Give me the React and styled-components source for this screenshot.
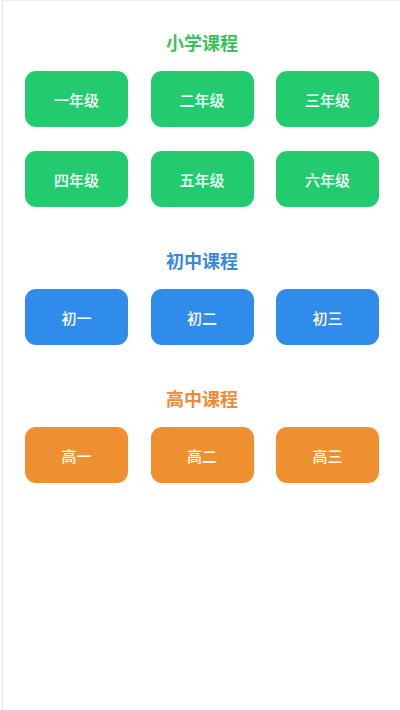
import React from "react";
import styled, { createGlobalStyle } from "styled-components";

const GlobalStyle = createGlobalStyle`
	html, body {
		margin: 0;
		padding: 0;
		background: #ffffff;
		font-family: "Noto Sans CJK SC", "Noto Sans", sans-serif;
	}
`;

const Page = styled.div`
	box-sizing: border-box;
	margin-left: 2px;
	min-height: 710px;
	border-left: 1px solid #e2e2e2;
	border-top: 1px solid #eeeeee;
	padding: 24px 21px 0 22px;
`;

const Section = styled.section`
	margin-bottom: ${(p) => p.gap}px;
`;

const Title = styled.h2`
	margin: 0 0 12px 0;
	height: 34px;
	line-height: 34px;
	text-align: center;
	font-size: 18px;
	font-weight: 700;
	color: ${(p) => p.color};
`;

const Grid = styled.div`
	display: grid;
	grid-template-columns: repeat(3, 103px);
	justify-content: space-between;
	row-gap: 24px;
`;

const CourseButton = styled.button`
	height: 56px;
	border: none;
	border-radius: 11px;
	background: ${(p) => p.bg};
	color: #ffffff;
	font-family: inherit;
	font-size: 15px;
	font-weight: 500;
	cursor: pointer;
	padding: 0;
`;

const sections = [
	{
		title: "小学课程",
		titleColor: "#3dc15c",
		bg: "#22cc6e",
		gap: 36,
		items: ["一年级", "二年级", "三年级", "四年级", "五年级", "六年级"],
	},
	{
		title: "初中课程",
		titleColor: "#3a89dd",
		bg: "#2f8ceb",
		gap: 36,
		items: ["初一", "初二", "初三"],
	},
	{
		title: "高中课程",
		titleColor: "#ef8a35",
		bg: "#f08f2f",
		gap: 0,
		items: ["高一", "高二", "高三"],
	},
];

export default function App() {
	return (
		<>
			<GlobalStyle />
			<Page>
				{sections.map((s) => (
					<Section key={s.title} gap={s.gap}>
						<Title color={s.titleColor}>{s.title}</Title>
						<Grid>
							{s.items.map((item) => (
								<CourseButton key={item} bg={s.bg}>
									{item}
								</CourseButton>
							))}
						</Grid>
					</Section>
				))}
			</Page>
		</>
	);
}
